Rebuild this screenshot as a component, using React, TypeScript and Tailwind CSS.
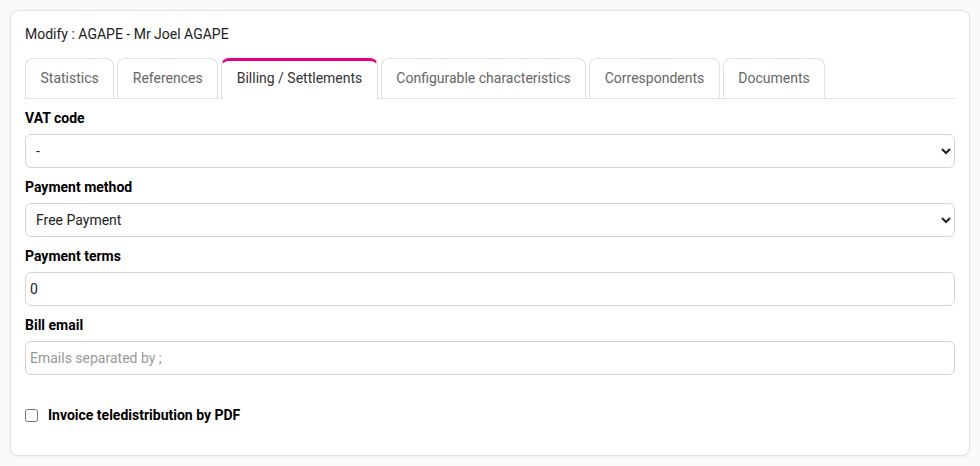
import React from "react";

const tabs = [
  "Statistics",
  "References",
  "Billing / Settlements",
  "Configurable characteristics",
  "Correspondents",
  "Documents",
];

export default function App() {
  const active = "Billing / Settlements";

  return (
    <div className="w-[980px] h-[466px] bg-[#fafafa] p-[10px] font-['Roboto',sans-serif] text-[14px] text-[#212529]">
      <div className="w-[960px] h-[446px] bg-white border border-[#e3e3e3] rounded-[8px] shadow-[0_1px_3px_rgba(0,0,0,0.06)] px-[14px] pt-[13px]">
        <div className="h-[20px] leading-[20px] text-[#222]">Modify : AGAPE - Mr Joel AGAPE</div>

        <div className="mt-[14px] flex gap-[3px] border-b border-[#dee2e6] h-[41px]">
          {tabs.map((t) =>
            t === active ? (
              <div
                key={t}
                className="h-[42px] px-[14.5px] pb-[3px] flex items-center bg-white border border-[#dee2e6] border-t-[3px] border-t-[#e6007e] border-b-white rounded-t-[8px] text-[#333]"
              >
                {t}
              </div>
            ) : (
              <div
                key={t}
                className="h-[41px] px-[14.5px] pb-[2px] flex items-center border border-b-0 border-[#dee2e6] rounded-t-[8px] text-[#666]"
              >
                {t}
              </div>
            )
          )}
        </div>

        <div className="mt-[9px] w-[930px]">
          <label className="block h-[20px] leading-[20px] font-bold text-black">VAT code</label>
          <select className="mt-[6px] block w-full h-[34px] border border-[#ced4da] rounded-[6px] pl-[6px] text-[14px] text-[#222] bg-white">
            <option>-</option>
          </select>

          <label className="mt-[9px] block h-[20px] leading-[20px] font-bold text-black">Payment method</label>
          <select className="mt-[6px] block w-full h-[34px] border border-[#ced4da] rounded-[6px] pl-[6px] text-[14px] text-[#222] bg-white">
            <option>Free Payment</option>
          </select>

          <label className="mt-[9px] block h-[20px] leading-[20px] font-bold text-black">Payment terms</label>
          <input
            className="mt-[6px] block w-full h-[34px] border border-[#ced4da] rounded-[6px] px-[4px] text-[14px] text-[#222] outline-none"
            defaultValue="0"
          />

          <label className="mt-[9px] block h-[20px] leading-[20px] font-bold text-black">Bill email</label>
          <input
            className="mt-[6px] block w-full h-[34px] border border-[#ced4da] rounded-[6px] px-[4px] text-[14px] text-[#222] placeholder:text-[#9a9a9a] outline-none"
            placeholder="Emails separated by ;"
          />

          <label className="mt-[30px] flex items-center h-[20px] gap-[10px] font-bold text-black">
            <input type="checkbox" className="m-0 w-[13px] h-[13px]" />
            Invoice teledistribution by PDF
          </label>
        </div>
      </div>
    </div>
  );
}
